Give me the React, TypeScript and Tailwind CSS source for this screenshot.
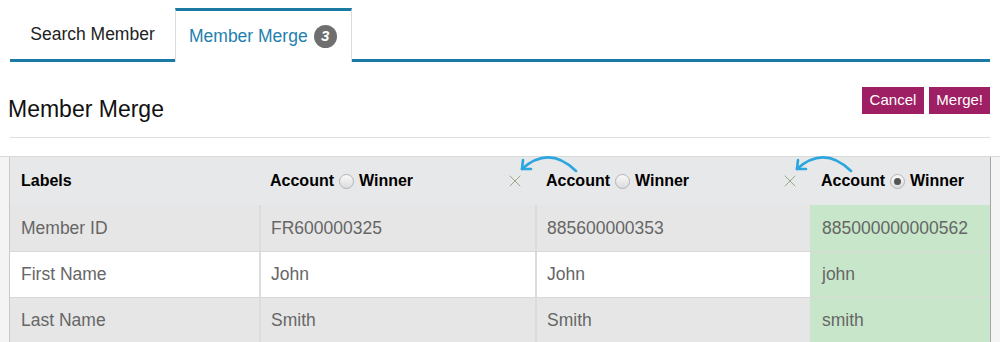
import { X } from 'lucide-react';

const COLS = [
  { id: 'FR600000325', first: 'John', last: 'Smith', winner: false, w: 'w-[276px]' },
  { id: '885600000353', first: 'John', last: 'Smith', winner: false, w: 'w-[275px]' },
  { id: '885000000000562', first: 'john', last: 'smith', winner: true, w: 'w-[180px]' },
];

const ROWS = [
  { label: 'Member ID', key: 'id', bg: 'bg-[#e6e6e6]' },
  { label: 'First Name', key: 'first', bg: 'bg-white' },
  { label: 'Last Name', key: 'last', bg: 'bg-[#e6e6e6]' },
] as const;

function Radio({ checked }: { checked: boolean }) {
  return (
    <span className="mx-[5px] inline-flex h-[15px] w-[15px] items-center justify-center rounded-full border border-[#b4b4b4] bg-gradient-to-b from-[#fafafa] to-[#dcdcdc]">
      {checked && <span className="h-[7px] w-[7px] rounded-full bg-[#555]" />}
    </span>
  );
}

function CurvedArrow() {
  return (
    <svg width="62" height="22" viewBox="0 0 62 22" fill="none" stroke="#2ba6de" strokeWidth="2.6" strokeLinecap="round"
      className="absolute left-[-17px] top-[-4px]">
      <path d="M58 18 Q 31 -8 4 16" />
      <path d="M4 16 L5 7 M4 16 L13 16" />
    </svg>
  );
}

export default function App() {
  return (
    <div className="h-[342px] w-[1000px] overflow-hidden bg-white font-['Liberation_Sans',Arial,sans-serif]">
      {/* Tabs */}
      <div className="mx-[10px] flex pt-[8px]">
        <div className="flex h-[54px] w-[165px] items-center justify-center border-b-[3px] border-[#1a7aa3] pt-[1px] text-[17.5px] text-[#222]">
          Search Member
        </div>
        <div className="flex h-[54px] w-[177px] items-center border-x border-t-[3px] border-x-[#dcdcdc] border-t-[#1a7aa3] pl-[13px] text-[17.5px] text-[#1f7fae]">
          Member Merge
          <span className="ml-[6px] flex h-[23px] w-[23px] items-center justify-center rounded-full bg-[#6f6f6f] text-[15px] font-bold italic text-white">3</span>
        </div>
        <div className="flex-1 border-b-[3px] border-[#1a7aa3]" />
      </div>

      {/* Title + actions */}
      <div className="mx-[10px] mt-[25px] flex h-[51px] justify-between border-b border-[#dedede]">
        <h1 className="-ml-[2px] pt-[9px] text-[23px] leading-[26px] text-[#111]">Member Merge</h1>
        <div className="flex gap-[5px]">
          <button className="h-[27px] bg-[#9e1f64] px-[8px] text-[15px] text-white">Cancel</button>
          <button className="h-[27px] bg-[#9e1f64] px-[7px] text-[15px] text-white">Merge!</button>
        </div>
      </div>

      {/* Merge table */}
      <div className="mt-[18px] border-t border-[#d9d9d9] bg-[#f4f4f4] px-[9px]">
        <div className="w-[982px] border-l border-r border-l-[#c9c9c9] border-r-[#a6a6a6]">
          <div className="flex h-[48px] bg-[#e7e8e9] text-[16px] font-bold text-black">
            <div className="flex w-[249px] items-center pl-[11px]">Labels</div>
            {COLS.map((c, i) => (
              <div key={c.id} className={`relative flex items-center pl-[11px] ${c.w}`}>
                {i > 0 && <CurvedArrow />}
                Account
                <Radio checked={c.winner} />
                Winner
                {i < 2 && <X size={20} strokeWidth={1.2} className="absolute right-[10px] top-[14px] text-[#98a887]" />}
              </div>
            ))}
          </div>
          {ROWS.map((r, ri) => (
            <div key={r.label} className={`flex h-[46px] text-[17.5px] text-[#666] ${ri > 0 ? 'border-t border-[#d8d8d8]' : ''} ${r.bg}`}>
              <div className="flex w-[249px] items-center pl-[11px]">{r.label}</div>
              {COLS.map((c) => (
                <div key={c.id}
                  className={`flex items-center border-l-2 pl-[10px] ${c.w} ${c.winner ? 'border-[#c8e6c9] bg-[#c8e6c9]' : 'border-[#dcdcdc]'}`}>
                  {c[r.key]}
                </div>
              ))}
            </div>
          ))}
        </div>
      </div>
    </div>
  );
}
